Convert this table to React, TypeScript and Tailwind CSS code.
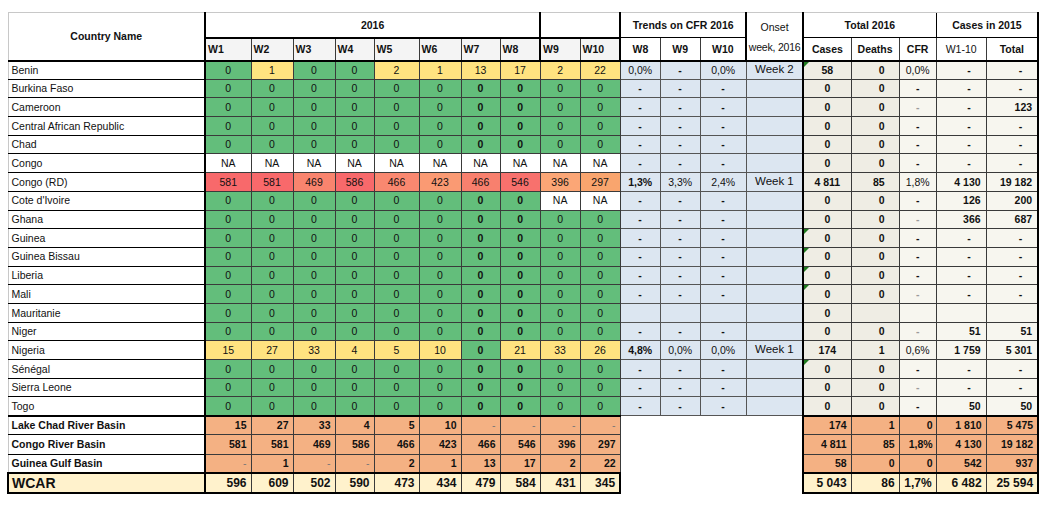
import React from "react";

const FONT =
  "font-['Liberation_Sans_Narrow','Arial_Narrow','Liberation_Sans',Arial,sans-serif]";

const G = "bg-[#63be7b]";
const Y = "bg-[#ffe380]";
const N = "bg-white";

type Cell = [string, string];
type Trend = [string, string, string];

type Row = {
  name: string;
  weeks: Cell[];
  trend: Trend;
  trendBold?: boolean;
  onset?: string;
  cases: string;
  deaths: string;
  cfr: string;
  cfrMuted?: boolean;
  w110: string;
  total: string;
  flag?: boolean;
};

const zeros: Cell[] = Array.from({ length: 10 }, () => ["0", G] as Cell);
const nas: Cell[] = Array.from({ length: 10 }, () => ["NA", N] as Cell);
const dash: Trend = ["-", "-", "-"];

const empty = (name: string, extra: Partial<Row> = {}): Row => ({
  name,
  weeks: zeros,
  trend: dash,
  cases: "0",
  deaths: "0",
  cfr: "-",
  w110: "-",
  total: "-",
  ...extra,
});

const rows: Row[] = [
  empty("Benin", {
    weeks: [["0", G], ["1", Y], ["0", G], ["0", G], ["2", Y], ["1", Y], ["13", Y], ["17", Y], ["2", Y], ["22", Y]],
    trend: ["0,0%", "-", "0,0%"],
    onset: "Week 2",
    cases: "58",
    cfr: "0,0%",
    flag: true,
  }),
  empty("Burkina Faso"),
  empty("Cameroon", { cfrMuted: true, total: "123" }),
  empty("Central African Republic"),
  empty("Chad"),
  empty("Congo", { weeks: nas }),
  empty("Congo (RD)", {
    weeks: [
      ["581", "bg-[#f8696b]"], ["581", "bg-[#f8696b]"], ["469", "bg-[#f9846e]"], ["586", "bg-[#f8696b]"],
      ["466", "bg-[#f98870]"], ["423", "bg-[#fa9a73]"], ["466", "bg-[#f8806e]"], ["546", "bg-[#f8716d]"],
      ["396", "bg-[#fba676]"], ["297", "bg-[#f9a56e]"],
    ],
    trend: ["1,3%", "3,3%", "2,4%"],
    trendBold: true,
    onset: "Week 1",
    cases: "4 811",
    deaths: "85",
    cfr: "1,8%",
    w110: "4 130",
    total: "19 182",
  }),
  empty("Cote d'Ivoire", { weeks: [...zeros.slice(0, 8), ["NA", N], ["NA", N]], w110: "126", total: "200" }),
  empty("Ghana", { cfrMuted: true, w110: "366", total: "687" }),
  empty("Guinea", { flag: true }),
  empty("Guinea Bissau", { flag: true }),
  empty("Liberia", { flag: true }),
  empty("Mali", { flag: true, cfrMuted: true }),
  empty("Mauritanie", { trend: ["", "", ""], deaths: "", cfr: "", w110: "", total: "" }),
  empty("Niger", { cfrMuted: true, w110: "51", total: "51" }),
  empty("Nigeria", {
    weeks: [["15", Y], ["27", Y], ["33", Y], ["4", Y], ["5", Y], ["10", Y], ["0", G], ["21", Y], ["33", Y], ["26", Y]],
    trend: ["4,8%", "0,0%", "0,0%"],
    trendBold: true,
    onset: "Week 1",
    cases: "174",
    deaths: "1",
    cfr: "0,6%",
    w110: "1 759",
    total: "5 301",
  }),
  empty("Sénégal", { flag: true }),
  empty("Sierra Leone", { cfrMuted: true }),
  empty("Togo", { w110: "50", total: "50" }),
];

const basins = [
  { name: "Lake Chad River Basin", weeks: ["15", "27", "33", "4", "5", "10", "-", "-", "-", "-"], cases: "174", deaths: "1", cfr: "0", w110: "1 810", total: "5 475" },
  { name: "Congo River Basin", weeks: ["581", "581", "469", "586", "466", "423", "466", "546", "396", "297"], cases: "4 811", deaths: "85", cfr: "1,8%", w110: "4 130", total: "19 182" },
  { name: "Guinea Gulf Basin", weeks: ["-", "1", "-", "-", "2", "1", "13", "17", "2", "22"], cases: "58", deaths: "0", cfr: "0", w110: "542", total: "937" },
];

const wcar = {
  weeks: ["596", "609", "502", "590", "473", "434", "479", "584", "431", "345"],
  cases: "5 043",
  deaths: "86",
  cfr: "1,7%",
  w110: "6 482",
  total: "25 594",
};

const widths = [197, 46, 42, 42, 39, 45, 42, 39, 40, 40, 40, 40, 40, 46, 57, 48, 48, 37, 50, 52];

const td = "p-0 leading-none align-middle whitespace-nowrap";
const grid = "border border-[#3a3a3a]";
const blue = "bg-[#dce6f1]";
const beige = "bg-[#efede4]";
const cream = "bg-[#f7f6ef]";
const salmon = "bg-[#f4b183]";
const wcarBg = "bg-[#fff2cc]";

function Flag() {
  return (
    <span className="absolute left-0 top-0 h-0 w-0 border-t-[5px] border-r-[5px] border-t-[#1f7a1f] border-r-transparent" />
  );
}

function Dash({ v, muted }: { v: string; muted?: boolean }) {
  if (v === "-") {
    return <span className={`pr-[15px] font-bold ${muted ? "text-[#999]" : "text-[#111]"}`}>-</span>;
  }
  return <span className="pr-[5px]">{v}</span>;
}

export default function App() {
  return (
    <div className={`h-[509px] w-[1056px] overflow-hidden bg-white pl-[7px] pt-[12px] text-[#111] ${FONT}`}>
      <table className="w-[1030px] table-fixed border-collapse text-[10.5px]">
        <colgroup>
          {widths.map((w, i) => (
            <col key={i} style={{ width: w }} />
          ))}
        </colgroup>
        <thead>
          <tr className="h-[25px]">
            <th rowSpan={2} className={`${td} border-l border-t border-l-[#c8c8c8] border-t-[#c8c8c8] border-r-2 border-b-2 border-r-black border-b-black text-center font-bold`}>
              Country Name
            </th>
            <th colSpan={8} className={`${td} border-t border-t-[#c8c8c8] border-l-2 border-b-2 border-l-black border-b-black text-center font-bold`}>
              2016
            </th>
            <th colSpan={2} className={`${td} border-t border-t-[#c8c8c8] border-l-2 border-b-2 border-l-black border-b-black`} />
            <th colSpan={3} className={`${td} border-t border-t-[#c8c8c8] border-l-2 border-b border-l-black border-b-black text-center font-bold`}>
              Trends on CFR 2016
            </th>
            <th rowSpan={2} className={`${td} border-t border-t-[#c8c8c8] border-l-2 border-b-2 border-l-black border-b-black text-center font-normal`}>
              <div className="flex flex-col items-center gap-[9px] pt-[2px] text-[10.5px] leading-[11px]">
                <span>Onset</span>
                <span className="tracking-[-0.2px]">week, 2016</span>
              </div>
            </th>
            <th colSpan={3} className={`${td} border-t border-t-[#c8c8c8] border-l-2 border-b border-l-black border-b-black text-center font-bold`}>
              Total 2016
            </th>
            <th colSpan={2} className={`${td} border-t border-t-[#c8c8c8] border-l border-r-2 border-b border-l-black border-r-black border-b-black text-center font-bold`}>
              Cases in 2015
            </th>
          </tr>
          <tr className="h-[23px]">
            {["W1", "W2", "W3", "W4", "W5", "W6", "W7", "W8", "W9", "W10"].map((w, i) => (
              <th
                key={w}
                className={`${td} ${grid} border-b-2 border-b-black bg-[#f4f4f4] pl-[2px] text-left font-bold ${i === 8 ? "border-l-2 border-l-black" : ""}`}
              >
                {w}
              </th>
            ))}
            {["W8", "W9", "W10"].map((w, i) => (
              <th key={w} className={`${td} ${grid} border-b-2 border-b-black bg-white text-center font-bold ${i === 0 ? "border-l-2 border-l-black" : ""}`}>
                {w}
              </th>
            ))}
            {["Cases", "Deaths", "CFR", "W1-10", "Total"].map((w, i) => (
              <th
                key={w}
                className={`${td} ${grid} border-b-2 border-b-black bg-white text-center ${i === 3 ? "font-normal" : "font-bold"} ${i === 0 ? "border-l-2 border-l-black" : ""} ${i === 4 ? "border-r-2 border-r-black" : ""}`}
              >
                {w}
              </th>
            ))}
          </tr>
        </thead>
        <tbody>
          {rows.map((r) => (
            <tr key={r.name} className="h-[18.7px]">
              <td className={`${td} border-l border-b border-l-[#c8c8c8] border-b-black border-r-2 border-r-black pl-[3px] text-left`}>
                {r.name}
              </td>
              {r.weeks.map(([v, bg], i) => (
                <td
                  key={i}
                  className={`${td} ${grid} ${bg} text-center ${(i === 6 || i === 7) && v === "0" ? "font-bold" : ""}`}
                >
                  {v}
                </td>
              ))}
              {r.trend.map((v, i) => (
                <td key={i} className={`${td} border border-[#555] ${blue} text-center ${r.trendBold && i === 0 ? "font-bold" : ""} ${i === 0 ? "border-l-[#333]" : ""}`}>
                  {v === "-" ? <span className="font-bold">-</span> : v}
                </td>
              ))}
              <td className={`${td} border border-[#555] ${blue} text-center text-[11.5px]`}>{r.onset ?? ""}</td>
              <td className={`${td} ${grid} relative ${beige} border-l-2 border-l-black text-center font-bold`}>
                {r.flag && <Flag />}
                {r.cases}
              </td>
              <td className={`${td} ${grid} ${beige} pr-[14px] text-right font-bold`}>{r.deaths}</td>
              <td className={`${td} ${grid} ${cream} text-center ${r.cfrMuted ? "text-[#9a9a9a]" : ""} ${r.cfr === "-" ? "font-bold" : ""}`}>
                {r.cfr}
              </td>
              <td className={`${td} ${grid} ${cream} text-right font-bold`}>
                <Dash v={r.w110} />
              </td>
              <td className={`${td} ${grid} ${cream} border-r-2 border-r-black text-right font-bold`}>
                <Dash v={r.total} />
              </td>
            </tr>
          ))}
          {basins.map((b, bi) => (
            <tr key={b.name} className="h-[19.3px]">
              <td className={`${td} border-l border-b border-l-[#c8c8c8] border-b-black border-r-2 border-r-black pl-[3px] text-left font-bold ${bi === 0 ? "border-t-2 border-t-black" : ""}`}>
                {b.name}
              </td>
              {b.weeks.map((v, i) => (
                <td
                  key={i}
                  className={`${td} ${grid} ${salmon} pr-[4px] text-right ${v === "-" ? "text-[#777]" : "font-bold"} ${bi === 0 ? "border-t-2 border-t-black" : ""}`}
                >
                  {v}
                </td>
              ))}
              <td colSpan={4} className={`${td} border-0 bg-white`} />
              <td className={`${td} ${grid} ${salmon} border-l-2 border-l-black pr-[4px] text-right font-bold ${bi === 0 ? "border-t-2 border-t-black" : ""}`}>
                {b.cases}
              </td>
              <td className={`${td} ${grid} ${salmon} pr-[4px] text-right font-bold ${bi === 0 ? "border-t-2 border-t-black" : ""}`}>{b.deaths}</td>
              <td className={`${td} ${grid} ${salmon} pr-[3px] text-right font-bold ${bi === 0 ? "border-t-2 border-t-black" : ""}`}>{b.cfr}</td>
              <td className={`${td} ${grid} ${salmon} pr-[4px] text-right font-bold ${bi === 0 ? "border-t-2 border-t-black" : ""}`}>{b.w110}</td>
              <td className={`${td} ${grid} ${salmon} border-r-2 border-r-black pr-[4px] text-right font-bold ${bi === 0 ? "border-t-2 border-t-black" : ""}`}>
                {b.total}
              </td>
            </tr>
          ))}
          <tr className="h-[19.3px]">
            <td className={`${td} border-2 border-black ${wcarBg} pl-[3px] text-left text-[14px] font-bold`}>WCAR</td>
            {wcar.weeks.map((v, i) => (
              <td
                key={i}
                className={`${td} border border-[#3a3a3a] border-t-2 border-b-2 border-t-black border-b-black ${wcarBg} pr-[4px] text-right text-[12px] font-bold ${i === 9 ? "border-r-2 border-r-black" : ""}`}
              >
                {v}
              </td>
            ))}
            <td colSpan={4} className={`${td} border-0 bg-white`} />
            {[wcar.cases, wcar.deaths, wcar.cfr, wcar.w110, wcar.total].map((v, i) => (
              <td
                key={i}
                className={`${td} border border-[#3a3a3a] border-t-2 border-b-2 border-t-black border-b-black ${wcarBg} pr-[4px] text-right text-[12px] font-bold ${i === 0 ? "border-l-2 border-l-black" : ""} ${i === 4 ? "border-r-2 border-r-black" : ""}`}
              >
                {v}
              </td>
            ))}
          </tr>
        </tbody>
      </table>
    </div>
  );
}
